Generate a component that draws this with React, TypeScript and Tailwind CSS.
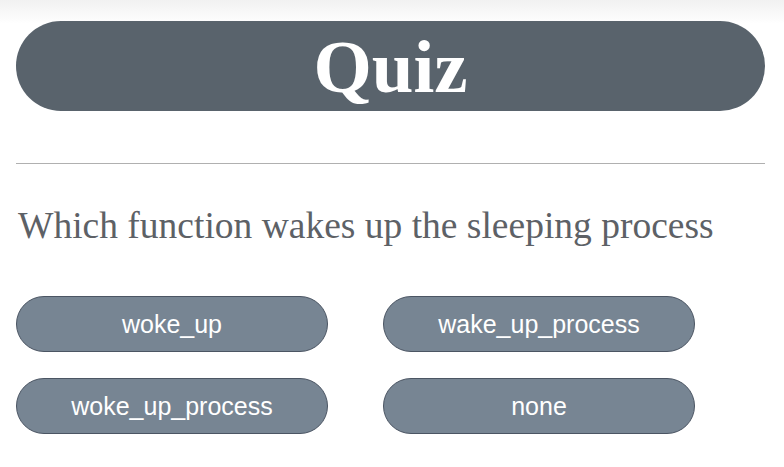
import React from "react";

export default function App() {
  const options = ["woke_up", "wake_up_process", "woke_up_process", "none"];
  return (
    <div className="w-[784px] h-[467px] overflow-hidden bg-[linear-gradient(to_bottom,#f1f1f1_0px,#ffffff_24px)] pl-4 pr-[19px]">
      <div className="pt-[21px]">
        <div className="h-[90px] rounded-full bg-[#59636c] flex items-center justify-center">
          <h1
            className="text-white font-bold text-[75px] leading-none"
            style={{ fontFamily: '"Liberation Serif", serif' }}
          >
            Quiz
          </h1>
        </div>
      </div>
      <div className="mt-[52px] h-px bg-[#b0b0b0]" />
      <p
        className="mt-[40px] text-[37.5px] leading-[44px] text-[#5d6166] pl-[2px]"
        style={{ fontFamily: '"Liberation Serif", serif' }}
      >
        Which function wakes up the sleeping process
      </p>
      <div className="mt-[48px] grid grid-cols-[312px_312px] gap-x-[55px] gap-y-[26px]">
        {options.map((o) => (
          <button
            key={o}
            className="h-[56px] rounded-full bg-[#778593] border border-[#4b5563] text-white text-[25px] flex items-center justify-center pt-[2px]"
            style={{ fontFamily: '"Liberation Sans", Arial, sans-serif' }}
          >
            {o}
          </button>
        ))}
      </div>
    </div>
  );
}
